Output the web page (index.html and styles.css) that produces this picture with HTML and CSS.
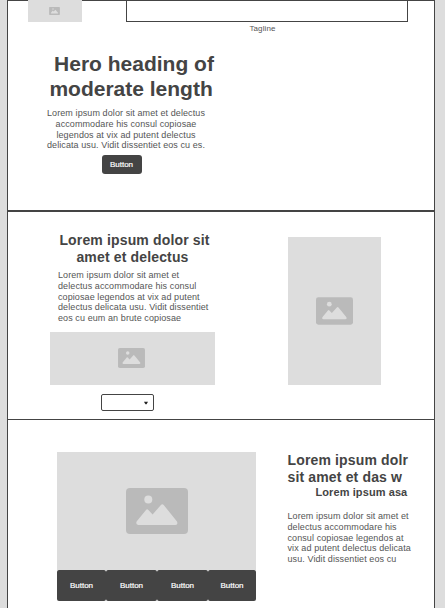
FILE: index.html
```
<!DOCTYPE html>
<html lang="en">
<head>
<meta charset="utf-8">
<title>Wireframe</title>
<link rel="stylesheet" href="styles.css">
</head>
<body>
<svg class="defs" width="0" height="0" aria-hidden="true">
  <symbol id="picture" viewBox="0 0 62 46">
    <rect width="62" height="46" rx="4" fill="#bababa"/>
    <circle cx="22.3" cy="11.5" r="4" fill="#ddd"/>
    <path d="M12.2 37Q9.5 36.5 10.6 33.5L20 22Q21.2 20.4 22.4 22L26.6 26.5L34.9 17Q36.3 15.4 37.7 17L51 33.5Q52.3 36.5 49.5 37Z" fill="#ddd"/>
  </symbol>
</svg>
<main class="page">
  <section class="hero">
    <header class="top">
      <div class="image logo"><svg><use href="#picture"/></svg></div>
      <div class="banner">
        <div class="box"></div>
        <p class="tagline">Tagline</p>
      </div>
    </header>
    <div class="intro">
      <h1>Hero heading of
moderate length </h1>
      <p class="copy">Lorem ipsum dolor sit amet et delectus
accommodare his consul copiosae
legendos at vix ad putent delectus
delicata usu. Vidit dissentiet eos cu es.</p>
      <button class="button">Button</button>
    </div>
  </section>
  <section class="feature">
    <div class="feature-main">
      <h2>Lorem ipsum dolor sit
amet et delectus </h2>
      <p class="copy">Lorem ipsum dolor sit amet et
delectus accommodare his consul
copiosae legendos at vix ad putent
delectus delicata usu. Vidit dissentiet
eos cu eum an brute copiosae</p>
      <div class="image wide"><svg><use href="#picture"/></svg></div>
      <div class="select"><svg viewBox="0 0 5 4"><path d="M0 .5H5L3.2 3.5H1.8Z"/></svg></div>
    </div>
    <div class="image tall"><svg><use href="#picture"/></svg></div>
  </section>
  <section class="gallery">
    <div class="gallery-media">
      <div class="image large"><svg><use href="#picture"/></svg></div>
      <div class="tabs">
        <button>Button</button><button>Button</button><button>Button</button><button>Button</button>
      </div>
    </div>
    <div class="gallery-text">
      <h2>Lorem ipsum dolr
sit amet et das w</h2>
      <h3>Lorem ipsum asa</h3>
      <p class="copy">Lorem ipsum dolor sit amet et
delectus accommodare his
consul copiosae legendos at
vix ad putent delectus delicata
usu. Vidit dissentiet eos cu</p>
    </div>
  </section>
</main>
</body>
</html>
```

FILE: styles.css
```
* { box-sizing: border-box; margin: 0; padding: 0; }
html, body { height: 608px; overflow: hidden; }
body {
  background: #ddd;
  color: #444;
  font-family: "Liberation Sans", Arial, sans-serif;
}
.defs { display: block; }
.page {
  width: 428px;
  height: 608px;
  margin-left: 7px;
  background: #fff;
  border: 1px solid #444;
  border-bottom: 0;
}
h1, h2, h3, .copy { white-space: pre; }
h1 { font-size: 21px; line-height: 25px; text-align: center; }
h2 { font-size: 14px; line-height: 17px; letter-spacing: .15px; }
h3 { font-size: 11px; line-height: 13px; letter-spacing: .09px; }
.copy { font-size: 9px; line-height: 10.8px; letter-spacing: .09px; color: #555; }
.image { display: flex; align-items: center; justify-content: center; background: #ddd; }
.image svg { display: block; }
button {
  border: 0;
  background: #444;
  color: #fff;
  font: 8px "Liberation Sans", Arial, sans-serif;
  -webkit-text-stroke: .2px #fff;
}

.hero { height: 211px; border-bottom: 2px solid #444; }
.top { display: flex; height: 33px; }
.logo { width: 54px; height: 22px; margin: -1px 44px 0 20px; padding-right: 1px; }
.logo svg { width: 11px; height: 8px; }
.banner { width: 282px; }
.box { height: 21px; border: 1px solid #444; border-top: 0; }
.tagline { margin-top: 2px; padding-right: 9px; font-size: 8px; line-height: 10px; letter-spacing: .1px; text-align: center; color: #555; }
.intro { display: flex; flex-direction: column; align-items: center; width: 170px; margin: 17px 0 0 41px; }
.intro h1 { width: 170px; }
.intro .copy { margin: 7px 0 0 -16px; text-align: center; }
.button { width: 40px; height: 19px; margin: 4px 0 0 -25px; border-radius: 3px; }

.feature { display: flex; height: 208px; padding: 20px 0 0 42px; border-bottom: 1px solid #444; }
.feature-main { width: 165px; margin-right: 73px; }
.feature h2 { margin: 0 -1px 0 3px; text-align: center; }
.feature-main .copy { margin: 4px 0 0 8px; }
.wide { height: 53px; margin-top: 8px; padding-right: 2px; }
.wide svg { width: 27px; height: 20px; }
.select {
  display: flex;
  align-items: center;
  justify-content: flex-end;
  width: 53px;
  height: 17px;
  margin: 9px 0 0 51px;
  padding: 1px 5px 0 0;
  border: 1px solid #444;
  border-radius: 2px;
}
.select svg { width: 4px; height: 4px; fill: #222; }
.tall { width: 93px; height: 148px; margin-top: 5px; }
.tall svg { width: 37px; height: 28px; }

.gallery { display: flex; padding: 32px 0 0 49px; }
.gallery-media { width: 199px; margin-right: 31.5px; }
.large { height: 118px; }
.large svg { width: 62px; height: 46px; }
.tabs { display: grid; grid-template-columns: 49px 51px 51px 48px; height: 31px; }
.tabs button { border-radius: 2px; }
.gallery-text h3 { margin-left: 28px; }
.gallery-text .copy { margin-top: 12px; }
```
